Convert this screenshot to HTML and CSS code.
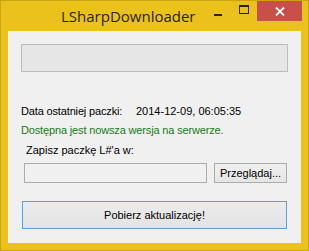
FILE: index.html
```html
<!DOCTYPE html>
<html lang="pl">
<head>
    <meta charset="UTF-8">
    <title>LSharpDownloader</title>
    <link rel="stylesheet" href="styles.css">
</head>
<body>

<div class="window">
    <div class="titlebar">
        <div class="title">LSharpDownloader</div>
        <div class="caption-buttons">
            <div class="cap-btn minimize"><span class="min-bar"></span></div>
            <div class="cap-btn maximize"><span class="max-box"></span></div>
            <div class="cap-btn close">
                <svg width="10" height="9" viewBox="0 0 10 9">
                    <path d="M1 0.5 L9 8.5 M9 0.5 L1 8.5" stroke="#fff" stroke-width="1.8" fill="none"/>
                </svg>
            </div>
        </div>
    </div>

    <div class="client">
        <div class="progress"></div>

        <div class="info-row">
            <span class="info-label">Data ostatniej paczki:</span>
            <span class="info-value">2014-12-09, 06:05:35</span>
        </div>
        <div class="status">Dostępna jest nowsza wersja na serwerze.</div>

        <div class="save-label">Zapisz paczkę L#'a w:</div>
        <div class="path-row">
            <input type="text" class="path-input">
            <button class="browse-btn">Przeglądaj...</button>
        </div>

        <button class="download-btn">Pobierz aktualizację!</button>
    </div>
</div>

</body>
</html>
```

FILE: styles.css
```css
body {
    margin: 0;
    font-family: "Liberation Sans", Arial, sans-serif;
    font-size: 11px;
    color: #000;
}
.window {
    width: 309px;
    height: 251px;
    box-sizing: border-box;
    background-color: #eac21b;
    border: 1px solid #c9a514;
}
.titlebar {
    display: flex;
    height: 30px;
}
.title {
    flex: 1;
    padding-left: 60px;
    padding-top: 5px;
    font-family: "Open Sans", "Noto Sans", sans-serif;
    font-size: 15px;
    color: #2a2410;
}
.caption-buttons {
    display: flex;
    margin-right: 6px;
}
.cap-btn {
    display: flex;
    align-items: center;
    justify-content: center;
    height: 20px;
}
.minimize {
    width: 26px;
}
.min-bar {
    width: 8px;
    height: 2px;
    margin-top: 8px;
    background-color: #2a2410;
}
.maximize {
    width: 26px;
}
.max-box {
    width: 8px;
    height: 6px;
    margin-top: -4px;
    border: 1px solid #2a2410;
    border-top-width: 2px;
}
.close {
    width: 45px;
    background-color: #c75048;
}
.client {
    display: flex;
    flex-direction: column;
    width: 293px;
    height: 212px;
    margin-left: 7px;
    box-sizing: border-box;
    padding: 13px 13px 0 13px;
    background-color: #f0f0f0;
}
.progress {
    height: 28px;
    box-sizing: border-box;
    border: 1px solid #bcbcbc;
    background-color: #e6e6e6;
}
.info-row {
    display: flex;
    margin-top: 33px;
    line-height: 13px;
}
.info-label {
    width: 115px;
    letter-spacing: -0.15px;
}
.status {
    margin-top: 6px;
    line-height: 13px;
    letter-spacing: -0.15px;
    color: #177a17;
}
.save-label {
    margin-top: 7px;
    margin-left: 5px;
    line-height: 13px;
}
.path-row {
    display: flex;
    margin-top: 6px;
    margin-left: 3px;
}
.path-input {
    width: 183px;
    height: 20px;
    box-sizing: border-box;
    margin: 0;
    border: 1px solid #acacac;
    background-color: #f0f0f0;
}
.browse-btn {
    width: 73px;
    height: 20px;
    margin-left: 7px;
    padding: 0;
    box-sizing: border-box;
    border: 1px solid #acacac;
    background: linear-gradient(#f0f0f0, #e5e5e5);
    font-family: "Liberation Sans", Arial, sans-serif;
    font-size: 11px;
    color: #000;
}
.download-btn {
    width: 265px;
    height: 28px;
    margin-top: 18px;
    margin-left: 1px;
    box-sizing: border-box;
    border: 1px solid #5aa0e0;
    background: linear-gradient(#ececec, #e3e3e3);
    font-family: "Liberation Sans", Arial, sans-serif;
    font-size: 11px;
    color: #000;
}
```
